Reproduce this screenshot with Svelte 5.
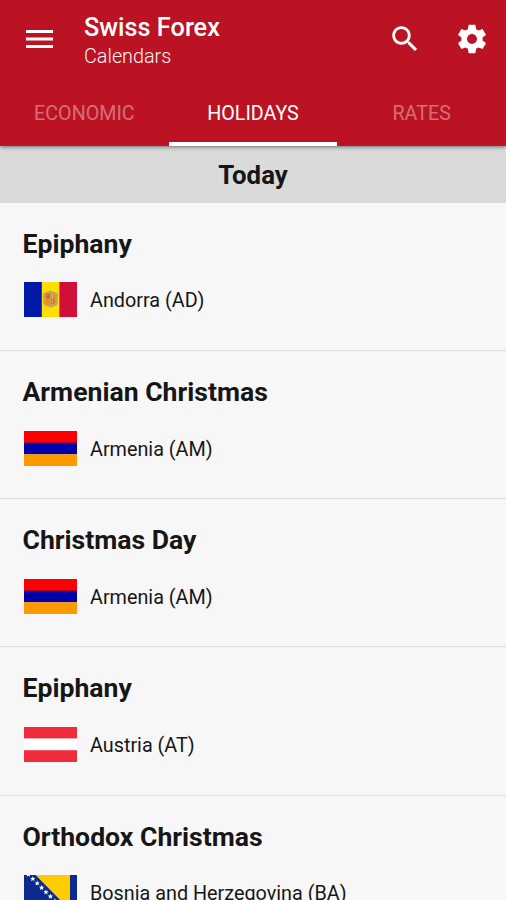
<script lang="ts">
  type Holiday = { name: string; country: string; code: string };

  let tabs: string[] = ["Economic", "Holidays", "Rates"];
  let active = 1;

  let holidays: Holiday[] = [
    { name: "Epiphany", country: "Andorra", code: "AD" },
    { name: "Armenian Christmas", country: "Armenia", code: "AM" },
    { name: "Christmas Day", country: "Armenia", code: "AM" },
    { name: "Epiphany", country: "Austria", code: "AT" },
    { name: "Orthodox Christmas", country: "Bosnia and Herzegovina", code: "BA" }
  ];

  // stars along the diagonal of the Bosnian flag
  let stars = [0, 1, 2, 3, 4, 5, 6, 7].map(i => ({ x: 4.4 + i * 4.4, y: -0.5 + i * 4.4 }));
</script>

<div class="screen">
  <header>
    <div class="toolbar">
      <svg class="menu" viewBox="0 0 27 18">
        <path d="M0 0h27v3H0zM0 7.5h27v3H0zM0 15h27v3H0z" />
      </svg>
      <div class="heading">
        <h1>Swiss Forex</h1>
        <p>Calendars</p>
      </div>
      <svg class="icon search" viewBox="0 0 24 24">
        <path d="M15.5 14h-.79l-.28-.27C15.41 12.59 16 11.11 16 9.5 16 5.91 13.09 3 9.5 3S3 5.91 3 9.5 5.91 16 9.5 16c1.61 0 3.09-.59 4.23-1.57l.27.28v.79l5 4.99L20.49 19l-4.99-5zm-6 0C7.01 14 5 11.99 5 9.5S7.01 5 9.5 5 14 7.01 14 9.5 11.99 14 9.5 14z" />
      </svg>
      <svg class="icon" viewBox="0 0 24 24">
        <path d="M19.43 12.98c.04-.32.07-.64.07-.98s-.03-.66-.07-.98l2.11-1.65c.19-.15.24-.42.12-.64l-2-3.46c-.12-.22-.39-.3-.61-.22l-2.49 1c-.52-.4-1.08-.73-1.69-.98l-.38-2.65C14.46 2.18 14.25 2 14 2h-4c-.25 0-.46.18-.49.42l-.38 2.65c-.61.25-1.17.59-1.69.98l-2.49-1c-.23-.09-.49 0-.61.22l-2 3.46c-.13.22-.07.49.12.64l2.11 1.65c-.04.32-.07.65-.07.98s.03.66.07.98l-2.11 1.65c-.19.15-.24.42-.12.64l2 3.46c.12.22.39.3.61.22l2.49-1c.52.4 1.08.73 1.69.98l.38 2.65c.03.24.24.42.49.42h4c.25 0 .46-.18.49-.42l.38-2.65c.61-.25 1.17-.59 1.69-.98l2.49 1c.23.09.49 0 .61-.22l2-3.46c.12-.22.07-.49-.12-.64l-2.11-1.65zM12 15.5c-1.93 0-3.5-1.57-3.5-3.5s1.57-3.5 3.5-3.5 3.5 1.57 3.5 3.5-1.57 3.5-3.5 3.5z" />
      </svg>
    </div>
    <nav>
      {#each tabs as tab, i}
        <button class="tab" class:active={i == active} on:click={() => (active = i)}>{tab}</button>
      {/each}
    </nav>
  </header>

  <h2>Today</h2>

  <ul>
    {#each holidays as holiday}
      <li>
        <h3>{holiday.name}</h3>
        <div class="country">
          <svg class="flag" viewBox="0 0 53 35" preserveAspectRatio="none">
            {#if holiday.code == "AD"}
              <rect width="18" height="35" fill="#0018a8" />
              <rect x="17.8" width="17.5" height="35" fill="#fedf00" />
              <rect x="35.3" width="17.7" height="35" fill="#d0103a" />
              <path d="M19.5 11l3-1 4-1.500 4 1.500 3 1 .8 4-.8 2.500.5 3-1.500 3-4.500 1.500-1.500 1-1.500-1-4.500-1.500-1.500-3 .5-3-.8-2.500z" fill="#c6a750" />
              <rect x="22" y="11.5" width="4" height="5" fill="#df5b2d" />
              <rect x="27" y="11.5" width="4.200" height="5" fill="#f08a1c" />
              <rect x="22" y="17.3" width="4" height="4.200" fill="#f28b1b" />
              <path d="M27 17.3h4.200v3l-2 1.700H27z" fill="#e56a24" />
              <path d="M23 13h1.500M28.500 12v4M28.500 18v3" stroke="#dfb276" />
            {:else if holiday.code == "AM"}
              <rect width="53" height="12" fill="#ff0000" />
              <rect y="11.7" width="53" height="11.6" fill="#0000aa" />
              <rect y="23.2" width="53" height="11.8" fill="#ff9900" />
            {:else if holiday.code == "AT"}
              <rect width="53" height="35" fill="#ef2b3c" />
              <rect y="11.4" width="53" height="11.8" fill="#fff" />
            {:else}
              <rect width="53" height="35" fill="#0c2a8c" />
              <path d="M11.5 0H46v35z" fill="#ffcc00" />
              {#each stars as star}
                <path
                  d="M0-2.700L.8-.9 2.600-.9 1.200.4 1.700 2.300 0 1.200-1.700 2.300-1.200.4-2.600-.9-.8-.9z"
                  transform="translate({star.x} {star.y})"
                  fill="#fff"
                />
              {/each}
            {/if}
          </svg>
          <span>{holiday.country} ({holiday.code})</span>
        </div>
      </li>
    {/each}
  </ul>
</div>

<style>
  :global(body) {
    background: #f7f7f7;
  }
  .screen {
    height: 900px;
    overflow: hidden;
    background: #f7f7f7;
    color: #161616;
    font-family: Roboto, sans-serif;
  }
  h1, h2, h3, p, ul {
    margin: 0;
    padding: 0;
  }
  header {
    position: relative;
    height: 146px;
    display: flex;
    flex-direction: column;
    background: #bb1323;
    color: #fff;
    box-shadow: 0 1px 4px rgba(0, 0, 0, .5);
  }
  .toolbar {
    display: flex;
    align-items: center;
    height: 78px;
    padding: 0 17px 0 26px;
  }
  .toolbar svg {
    fill: #fff;
  }
  .menu {
    width: 27px;
    height: 18px;
  }
  .heading {
    flex: 1;
    padding: 7px 0 0 31px;
  }
  h1 {
    font-size: 25.3px;
    line-height: 29px;
    font-weight: 500;
  }
  p {
    font-size: 19.8px;
    line-height: 30px;
    font-weight: 300;
    opacity: .95;
  }
  .icon {
    width: 34px;
    height: 34px;
  }
  .search {
    margin-right: 33px;
  }
  nav {
    flex: 1;
    display: grid;
    grid-template-columns: repeat(3, 1fr);
  }
  .tab {
    border: 0;
    border-bottom: 4px solid transparent;
    padding: 6px 0 0;
    background: none;
    color: rgba(255, 255, 255, .4);
    font: 400 19.7px Roboto, sans-serif;
    text-transform: uppercase;
  }
  .tab.active {
    color: #fff;
    border-color: #fff;
  }
  h2 {
    height: 56.8px;
    box-sizing: border-box;
    padding-top: 1px;
    background: #dadada;
    font-size: 25.8px;
    line-height: 56px;
    font-weight: 700;
    text-align: center;
  }
  ul {
    list-style: none;
  }
  li {
    box-sizing: border-box;
    height: 148.2px;
    padding: 25px 24px 0;
    border-bottom: 1px solid #dedede;
  }
  h3 {
    margin-left: -1.5px;
    font-size: 26.6px;
    line-height: 31px;
    font-weight: 700;
  }
  .country {
    display: flex;
    align-items: center;
    gap: 13px;
    margin-top: 23.6px;
    font-size: 19.8px;
    white-space: nowrap;
  }
  .country span {
    padding-top: 2px;
  }
  .flag {
    width: 53px;
    height: 35px;
    overflow: hidden;
  }
</style>
